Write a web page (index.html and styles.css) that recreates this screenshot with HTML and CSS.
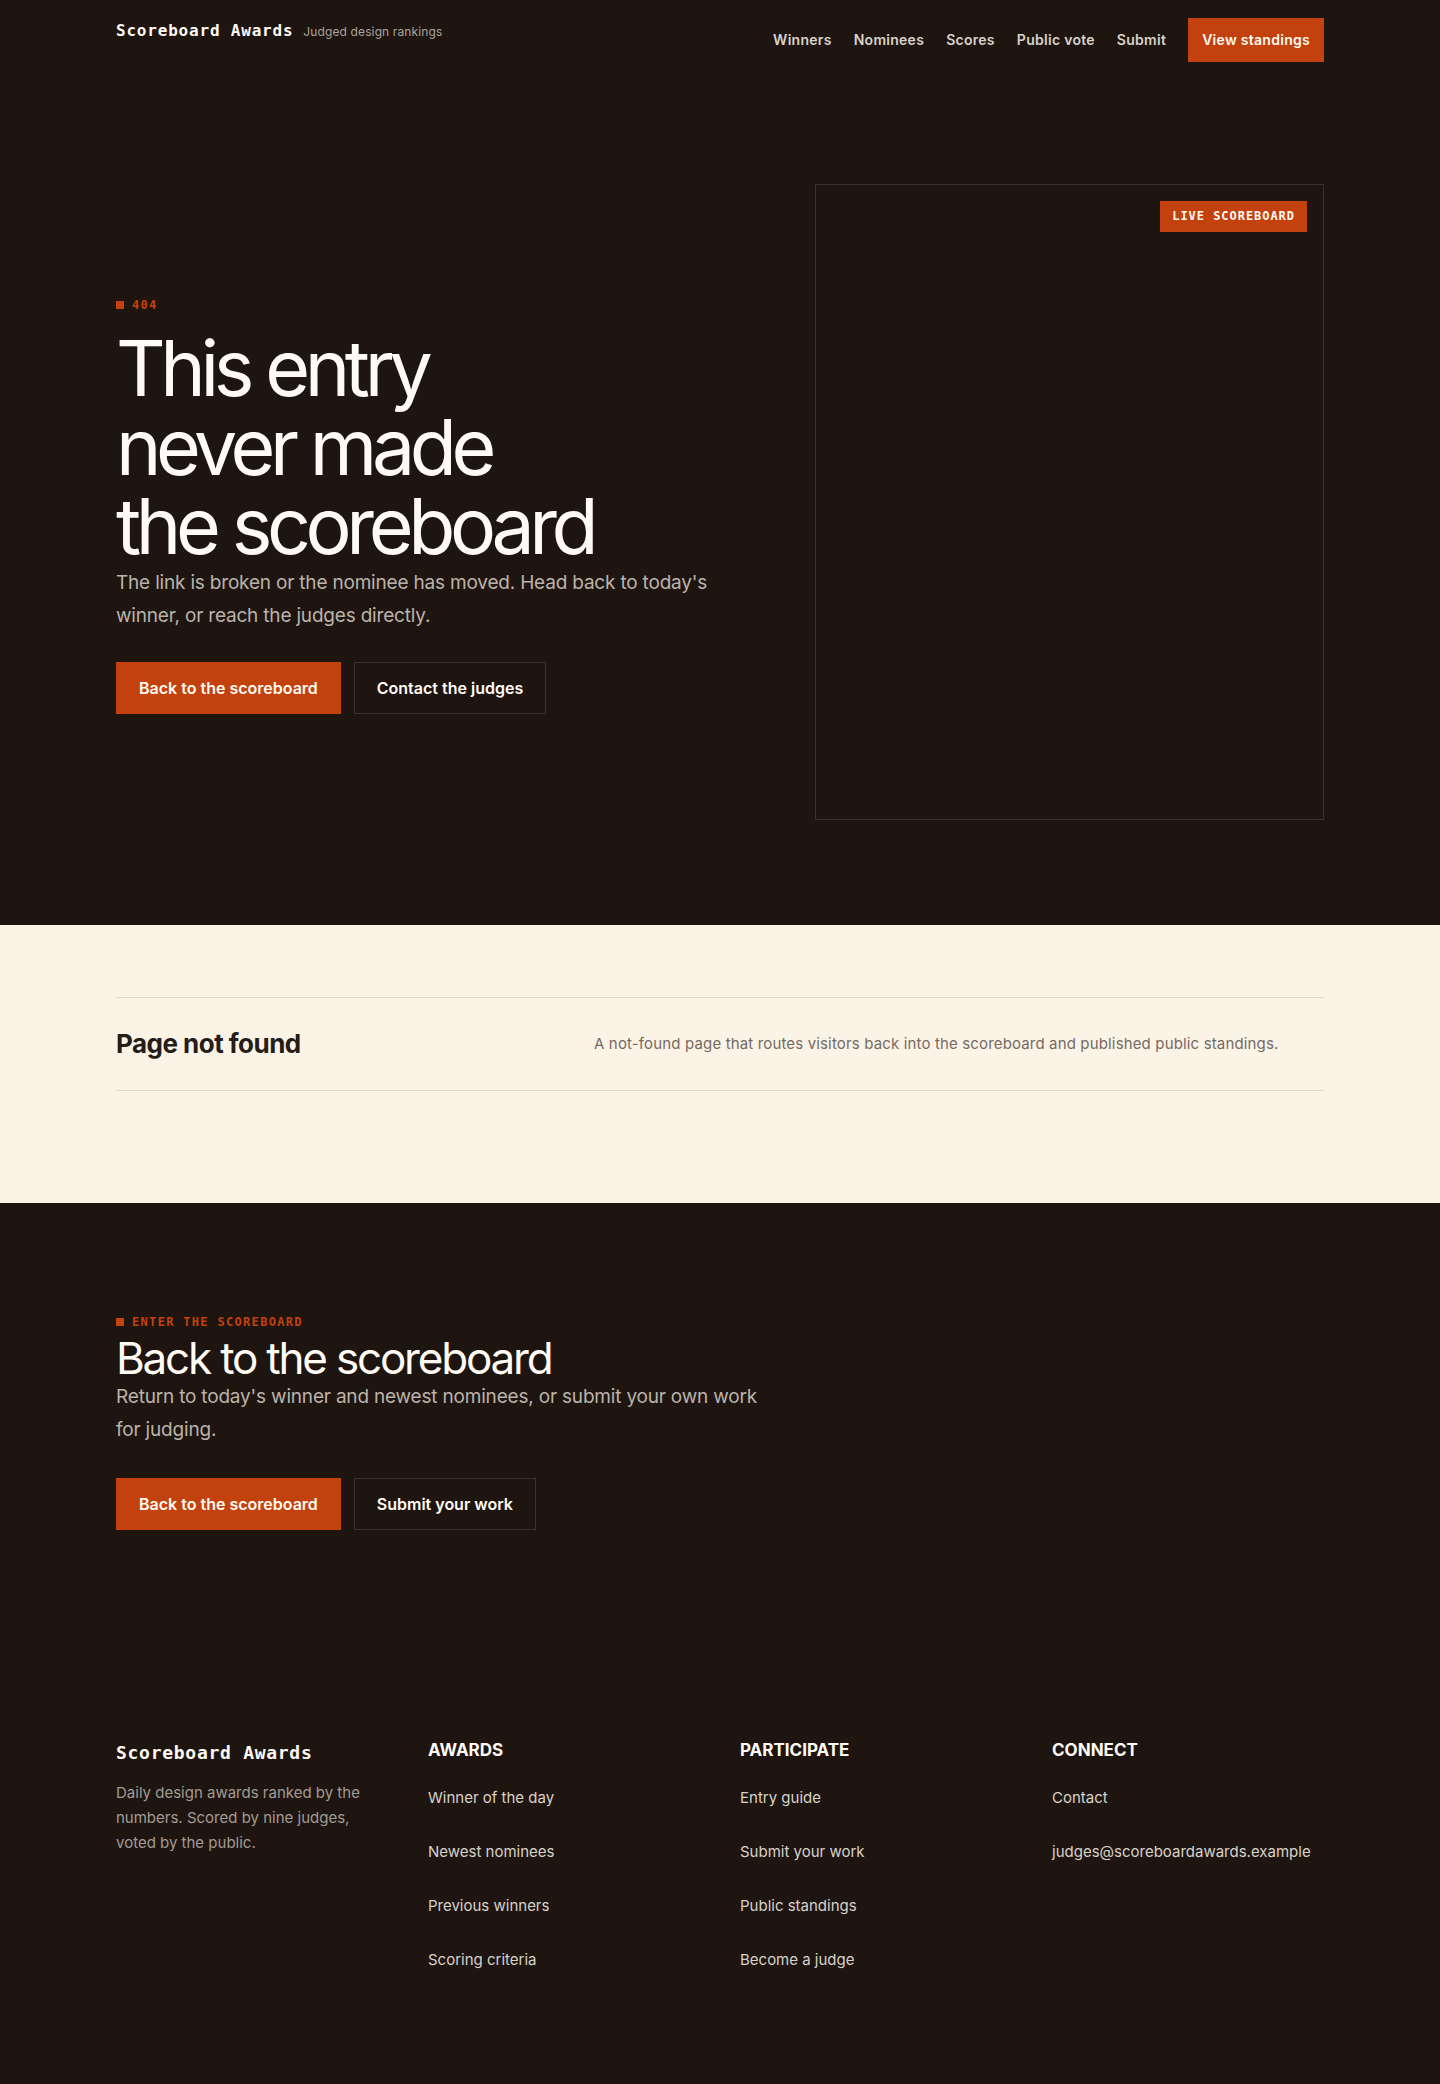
FILE: index.html
```html
<!DOCTYPE html>
<html lang="en">
<head>
<meta charset="utf-8">
<meta name="viewport" content="width=device-width, initial-scale=1">
<title>Page not found – Scoreboard Awards</title>
<link rel="stylesheet" href="styles.css">
</head>
<body>
<header class="site-header">
  <div class="container header-row">
    <a class="brand" href="#"><span class="brand-name">Scoreboard Awards</span><span class="brand-tag">Judged design rankings</span></a>
    <nav class="nav" aria-label="Main">
      <a href="#">Winners</a>
      <a href="#">Nominees</a>
      <a href="#">Scores</a>
      <a href="#">Public vote</a>
      <a href="#">Submit</a>
      <a class="nav-cta" href="#">View standings</a>
    </nav>
  </div>
</header>
<main>
  <section class="hero">
    <div class="container hero-grid">
      <div class="hero-copy">
        <p class="eyebrow">404</p>
        <h1>This entry<br>never made<br>the scoreboard</h1>
        <p class="lead">The link is broken or the nominee has moved. Head back to today's winner, or reach the judges directly.</p>
        <div class="actions">
          <a class="button button-primary" href="#">Back to the scoreboard</a>
          <a class="button" href="#">Contact the judges</a>
        </div>
      </div>
      <div class="frame"><span class="badge">Live scoreboard</span></div>
    </div>
  </section>
  <section class="summary">
    <div class="container">
      <div class="summary-row">
        <h2>Page not found</h2>
        <p>A not-found page that routes visitors back into the scoreboard and published public standings.</p>
      </div>
    </div>
  </section>
  <section class="cta">
    <div class="container">
      <p class="eyebrow">Enter the scoreboard</p>
      <h2>Back to the scoreboard</h2>
      <p class="lead">Return to today's winner and newest nominees, or submit your own work for judging.</p>
      <div class="actions">
        <a class="button button-primary" href="#">Back to the scoreboard</a>
        <a class="button" href="#">Submit your work</a>
      </div>
    </div>
  </section>
</main>
<footer class="site-footer">
  <div class="container footer-grid">
    <div>
      <p class="footer-brand">Scoreboard Awards</p>
      <p class="footer-note">Daily design awards ranked by the numbers. Scored by nine judges, voted by the public.</p>
    </div>
    <div>
      <h3>Awards</h3>
      <ul>
        <li><a href="#">Winner of the day</a></li>
        <li><a href="#">Newest nominees</a></li>
        <li><a href="#">Previous winners</a></li>
        <li><a href="#">Scoring criteria</a></li>
      </ul>
    </div>
    <div>
      <h3>Participate</h3>
      <ul>
        <li><a href="#">Entry guide</a></li>
        <li><a href="#">Submit your work</a></li>
        <li><a href="#">Public standings</a></li>
        <li><a href="#">Become a judge</a></li>
      </ul>
    </div>
    <div>
      <h3>Connect</h3>
      <ul>
        <li><a href="#">Contact</a></li>
        <li><a href="#">judges@scoreboardawards.example</a></li>
      </ul>
    </div>
  </div>
</footer>
</body>
</html>
```
FILE: styles.css
```css
:root {
  --ink: #1e1510;
  --cream: #fcf3e7;
  --paper: #fffaf3;
  --accent: #c2410c;
  --line: #3a322d;
  --mono: "DejaVu Sans Mono", monospace;
}

* { box-sizing: border-box; }

body {
  margin: 0;
  background: var(--ink);
  color: var(--paper);
  font: 400 16px/24px Inter, sans-serif;
}

h1, h2, h3, p, ul { margin: 0; padding: 0; }
ul { list-style: none; }
a { color: inherit; text-decoration: none; }

.container {
  max-width: 1320px;
  margin: 0 auto;
  padding: 0 56px;
}

/* Header */
.header-row {
  display: flex;
  justify-content: space-between;
  align-items: flex-start;
  padding-top: 18px;
  padding-bottom: 18px;
}
.brand { display: flex; align-items: baseline; gap: 10px; }
.brand-name { font: 700 16px/26px var(--mono); letter-spacing: 0.05em; }
.brand-tag { font-size: 12px; letter-spacing: 0.01em; color: #aba49d; }
.nav {
  display: flex;
  align-items: center;
  gap: 22px;
  font-size: 14px;
  font-weight: 600;
  letter-spacing: 0.02em;
  color: #d9d2ca;
}
.nav-cta {
  display: flex;
  align-items: center;
  min-height: 44px;
  padding: 0 14px;
  background: var(--accent);
  color: var(--paper);
}

/* Hero */
.hero { padding: 104px 0 105px; }
.hero-grid {
  display: grid;
  grid-template-columns: 1.2fr 1fr;
  gap: 88px;
  align-items: center;
}
.eyebrow {
  display: flex;
  align-items: center;
  gap: 8px;
  font: 700 12px/28px var(--mono);
  letter-spacing: 0.11em;
  text-transform: uppercase;
  color: var(--accent);
}
.eyebrow::before {
  content: "";
  width: 8px;
  height: 8px;
  background: var(--accent);
}
.hero .eyebrow { margin-bottom: 10px; }
h1 {
  font-size: 77px;
  line-height: 79px;
  font-weight: 400;
  letter-spacing: -0.07em;
}
.lead {
  max-width: 660px;
  font-size: 19px;
  line-height: 33px;
  letter-spacing: -0.01em;
  color: #bbb3ab;
}
.actions {
  display: flex;
  flex-wrap: wrap;
  gap: 13px;
  margin-top: 30px;
}
.button {
  display: flex;
  align-items: center;
  min-height: 52px;
  padding: 0 22px;
  border: 1px solid var(--line);
  font-weight: 600;
}
.button-primary { background: var(--accent); border-color: var(--accent); }
.frame {
  position: relative;
  aspect-ratio: 4 / 5;
  border: 1px solid var(--line);
}
.badge {
  position: absolute;
  top: 16px;
  right: 16px;
  padding: 0 12px;
  background: var(--accent);
  font: 700 12px/31px var(--mono);
  letter-spacing: 0.08em;
  text-transform: uppercase;
}

/* Summary */
.summary {
  padding: 72px 0 112px;
  background: var(--cream);
  color: #241d18;
}
.summary-row {
  display: grid;
  grid-template-columns: 0.6fr 1fr;
  gap: 40px;
  align-items: center;
  padding: 28px 0;
  border: solid #e2d9cd;
  border-width: 1px 0;
}
.summary h2 {
  font-size: 26px;
  line-height: 36px;
  font-weight: 700;
  letter-spacing: -0.02em;
}
.summary p {
  font-size: 15px;
  letter-spacing: 0.01em;
  color: #746b63;
}

/* Call to action */
.cta { padding: 105px 0 112px; }
.cta h2 {
  font-size: 44px;
  line-height: 44px;
  font-weight: 400;
  letter-spacing: -0.05em;
}
.cta .actions { margin-top: 32px; }

/* Footer */
.site-footer { padding: 96px 0 102px; }
.footer-grid {
  display: grid;
  grid-template-columns: repeat(4, 1fr);
  gap: 40px;
}
.footer-brand {
  margin-bottom: 12px;
  font: 700 18px/30px var(--mono);
  letter-spacing: 0.04em;
}
.footer-note { font-size: 15px; line-height: 25px; color: #a39b93; }
h3 {
  margin-bottom: 14px;
  font-size: 17px;
  line-height: 24px;
  font-weight: 700;
  text-transform: uppercase;
}
.footer-grid ul { display: grid; gap: 10px; }
.footer-grid li a {
  display: flex;
  align-items: center;
  min-height: 44px;
  font-size: 15px;
  color: #d9d2ca;
}
```
